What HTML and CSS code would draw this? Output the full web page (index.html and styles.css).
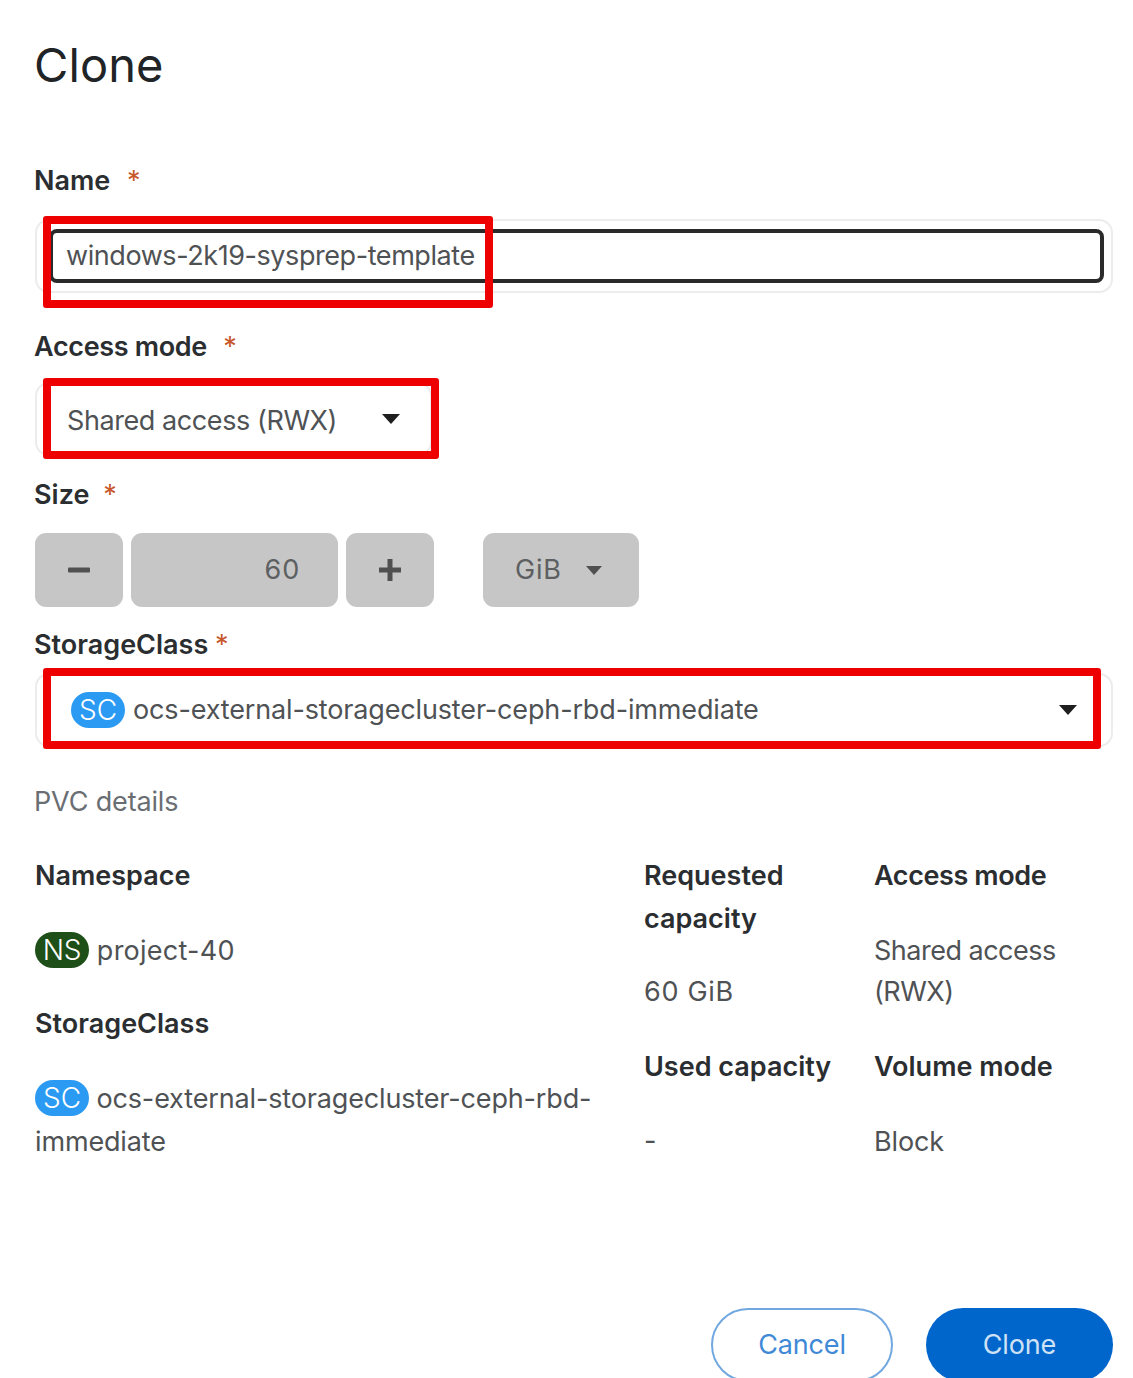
FILE: index.html
```html
<!DOCTYPE html>
<html lang="en">

<head>
    <meta charset="UTF-8">
    <meta name="viewport" content="width=device-width, initial-scale=1.0">
    <link rel="stylesheet" href="styles.css">
    <title>Clone</title>
</head>

<body>
    <div class="modal">
        <h1 class="title">Clone</h1>

        <div class="label label-name">Name <span class="req req-gap">*</span></div>
        <div class="input-outer">
            <div class="input-inner">windows-2k19-sysprep-template</div>
            <div class="mark mark-name"></div>
        </div>

        <div class="label label-access">Access mode <span class="req req-gap">*</span></div>
        <div class="select-outer select-access">
            <span class="select-text">Shared access (RWX)</span>
            <span class="caret"></span>
            <div class="mark mark-fill"></div>
        </div>

        <div class="label label-size">Size <span class="req req-size">*</span></div>
        <div class="stepper">
            <div class="step-btn">
                <svg width="22" height="22" viewBox="0 0 22 22"><rect x="0" y="8.5" width="22" height="5" rx="1" fill="#505050"/></svg>
            </div>
            <div class="step-value">60</div>
            <div class="step-btn">
                <svg width="22" height="22" viewBox="0 0 22 22"><path d="M8.5 0h5v8.5H22v5h-8.500V22h-5v-8.500H0v-5h8.500z" fill="#505050"/></svg>
            </div>
            <div class="unit">GiB <span class="caret caret-small"></span></div>
        </div>

        <div class="label label-class">StorageClass <span class="req">*</span></div>
        <div class="select-outer select-class">
            <span class="badge badge-sc">SC</span>
            <span class="select-text">ocs-external-storagecluster-ceph-rbd-immediate</span>
            <span class="caret caret-end"></span>
            <div class="mark mark-class"></div>
        </div>

        <div class="section-title">PVC details</div>

        <div class="details">
            <div class="col col-main">
                <div class="term">Namespace</div>
                <div class="value value-gap value-project"><span class="badge badge-ns">NS</span> project-40</div>
                <div class="term term-second">StorageClass</div>
                <div class="value value-gap"><span class="badge badge-sc">SC</span> ocs-external-storagecluster-ceph-rbd-immediate</div>
            </div>
            <div class="col col-cap">
                <div class="term">Requested capacity</div>
                <div class="value value-cap">60 GiB</div>
                <div class="term term-third">Used capacity</div>
                <div class="value value-dash">-</div>
            </div>
            <div class="col col-mode">
                <div class="term term-access">Access mode</div>
                <div class="value value-shared">Shared access (RWX)</div>
                <div class="term term-volume">Volume mode</div>
                <div class="value value-gap">Block</div>
            </div>
        </div>

        <div class="actions">
            <button class="btn btn-cancel">Cancel</button>
            <button class="btn btn-clone">Clone</button>
        </div>
    </div>
</body>

</html>
```

FILE: styles.css
```css
* {
    margin: 0;
    padding: 0;
    box-sizing: border-box;
}

html,
body {
    height: 1378px;
    overflow: hidden;
}

body {
    background-color: #fff;
    font-family: "Inter", "Open Sans", sans-serif;
    font-size: 27px;
    line-height: 42px;
    letter-spacing: -0.15px;
    color: #4f5255;
}

.modal {
    padding: 33px 20px 0 35px;
}

.title {
    font-size: 47px;
    line-height: 64px;
    font-weight: 400;
    letter-spacing: 0.1px;
    margin-left: -1px;
    color: #212427;
}

.label {
    font-weight: 600;
    letter-spacing: 0;
    margin-left: -1px;
    color: #2b2e31;
}

.label-name {
    margin-top: 63px;
}

.label-access {
    margin-top: 33px;
    letter-spacing: -0.35px;
}

.label-size {
    margin-top: 18px;
}

.label-class {
    margin-top: 17px;
}

.req {
    color: #c9572c;
    font-weight: 400;
}

.req-gap {
    margin-left: 10px;
}

.req-size {
    margin-left: 7px;
}

.input-outer {
    position: relative;
    height: 74px;
    margin-top: 17px;
    padding: 8px 7px 8px 12px;
    border: 2px solid #ececec;
    border-radius: 14px;
}

.input-inner {
    height: 54px;
    padding-left: 13px;
    border: 4px solid #2a2a2a;
    border-radius: 8px;
    line-height: 46px;
    letter-spacing: -0.43px;
}

.mark {
    position: absolute;
    border: 8px solid #ee0000;
    border-radius: 3px;
}

.mark-name {
    left: 6px;
    top: -5px;
    width: 450px;
    height: 92px;
}

.mark-fill {
    left: 6px;
    top: -6px;
    width: 396px;
    height: 81px;
}

.mark-class {
    left: 6px;
    top: -7px;
    width: 1058px;
    height: 81px;
}

.select-outer {
    position: relative;
    display: flex;
    align-items: center;
    height: 74px;
    padding: 0 30px;
    border: 2px solid #ececec;
    border-radius: 14px;
}

.select-access {
    width: 397px;
    margin-top: 14px;
}

.select-access .select-text {
    padding-top: 3px;
    letter-spacing: -0.42px;
}

.select-class {
    width: 1078px;
    margin-top: 7px;
}

.select-text {
    flex: 1;
}

.caret {
    display: inline-block;
    width: 0;
    height: 0;
    border-left: 9px solid transparent;
    border-right: 9px solid transparent;
    border-top: 10px solid #1f1f1f;
}

.caret-small {
    margin-left: 24px;
    border-left-width: 8px;
    border-right-width: 8px;
    border-top-width: 9px;
    border-top-color: #505050;
    vertical-align: 2px;
}

.caret-end {
    margin-right: 4px;
}

.stepper {
    display: flex;
    gap: 8px;
    height: 74px;
    margin-top: 17px;
}

.step-btn,
.step-value,
.unit {
    display: flex;
    align-items: center;
    background-color: #c6c6c6;
    border-radius: 11px;
    color: #5d5f61;
}

.step-btn {
    justify-content: center;
    width: 88px;
}

.step-value {
    justify-content: flex-end;
    width: 207px;
    padding-right: 38px;
    letter-spacing: 0.8px;
}

.unit {
    width: 156px;
    margin-left: 41px;
    padding-left: 32px;
    letter-spacing: 0.8px;
}

.badge {
    display: inline-block;
    flex: none;
    width: 54px;
    height: 36px;
    border-radius: 18px;
    color: #fff;
    font-size: 28px;
    font-weight: 300;
    line-height: 36px;
    letter-spacing: -0.15px;
    text-align: center;
}

.badge-sc {
    background-color: #2b9af3;
}

.badge-ns {
    background-color: #1e4f18;
}

.select-class .badge {
    margin-right: 8px;
    margin-left: 4px;
}

.section-title {
    margin-top: 34px;
    margin-left: -1px;
    color: #6a6e73;
}

.details {
    display: flex;
    margin-top: 31px;
    line-height: 43px;
}

.col-main {
    width: 609px;
    padding-right: 9px;
}

.col-cap {
    width: 230px;
    padding-right: 20px;
}

.col-mode {
    width: 239px;
}

.term {
    font-weight: 600;
    letter-spacing: 0;
    color: #2b2e31;
}

.term-access {
    letter-spacing: -0.4px;
}

.value-gap {
    margin-top: 32px;
}

.value-project {
    letter-spacing: 0.25px;
}

.value-shared {
    margin-top: 33px;
    line-height: 41px;
    letter-spacing: -0.5px;
}

.value-cap {
    margin-top: 30px;
    letter-spacing: 0.7px;
}

.value-dash {
    margin-top: 31px;
}

.term-second {
    margin-top: 30px;
}

.term-third {
    margin-top: 32px;
}

.term-volume {
    margin-top: 33px;
}

.actions {
    position: absolute;
    top: 1308px;
    right: 20px;
    display: flex;
    gap: 33px;
}

.btn {
    height: 74px;
    border-radius: 37px;
    font: inherit;
    letter-spacing: inherit;
    background: none;
}

.btn-cancel {
    width: 182px;
    border: 2px solid #72a8e0;
    color: #3f89d6;
}

.btn-clone {
    width: 187px;
    border: none;
    background-color: #0066cc;
    color: #cfe2f5;
}
```
